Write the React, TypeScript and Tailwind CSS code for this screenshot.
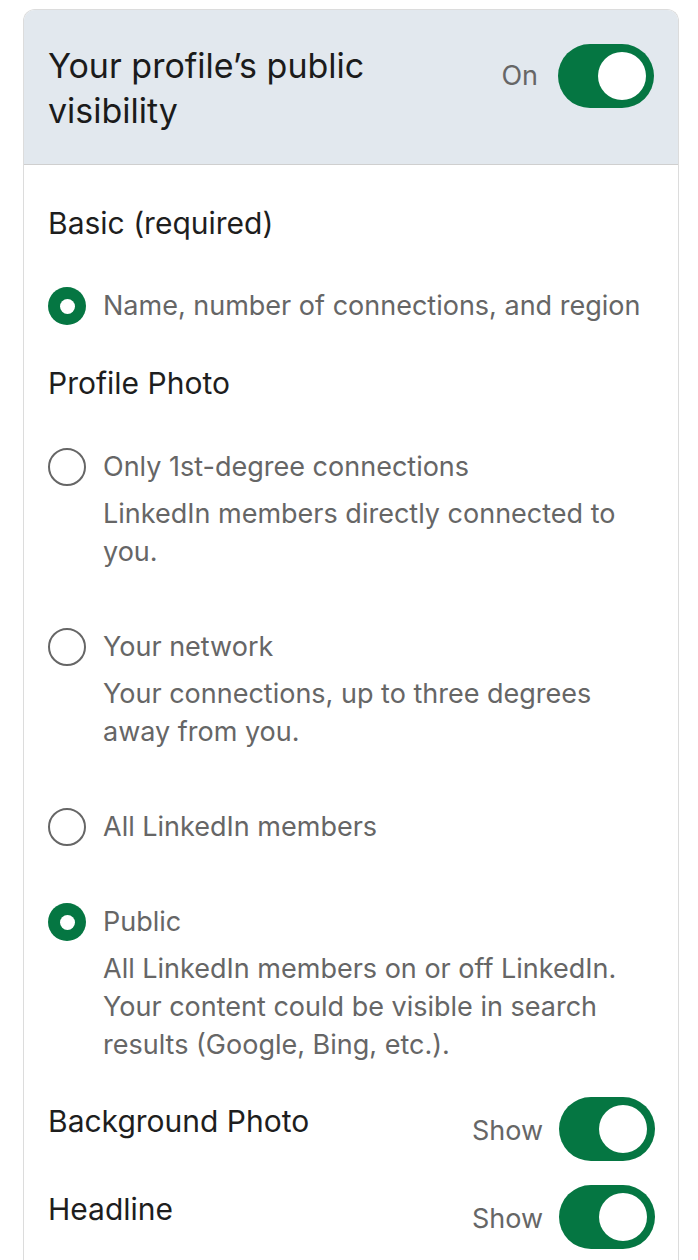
import React from "react";

const FONT = { fontFamily: 'Inter, "Liberation Sans", Arial, sans-serif' };

function Toggle({ on = true }: { on?: boolean }) {
  return (
    <div
      className={`w-[96px] h-[64px] rounded-full flex items-center px-[8px] ${
        on ? "bg-[#057642] justify-end" : "bg-[#8c8c8c] justify-start"
      }`}
    >
      <div className="w-[48px] h-[48px] rounded-full bg-white" />
    </div>
  );
}

function Radio({ checked }: { checked: boolean }) {
  return checked ? (
    <div className="w-[38px] h-[38px] rounded-full bg-[#057642] flex items-center justify-center shrink-0">
      <div className="w-[15px] h-[15px] rounded-full bg-white" />
    </div>
  ) : (
    <div className="w-[38px] h-[38px] rounded-full border-2 border-[#666666] shrink-0" />
  );
}

interface Option {
  title: string;
  desc?: string;
  checked: boolean;
}

const PHOTO_OPTIONS: Option[] = [
  {
    title: "Only 1st-degree connections",
    desc: "LinkedIn members directly connected to you.",
    checked: false,
  },
  {
    title: "Your network",
    desc: "Your connections, up to three degrees away from you.",
    checked: false,
  },
  { title: "All LinkedIn members", checked: false },
  {
    title: "Public",
    desc: "All LinkedIn members on or off LinkedIn. Your content could be visible in search results (Google, Bing, etc.).",
    checked: true,
  },
];

function RadioRow({ option }: { option: Option }) {
  return (
    <div className="flex gap-[17px]">
      <Radio checked={option.checked} />
      <div className="flex-1 min-w-0">
        <div className="text-[27px] leading-[38px] text-[#666666]">{option.title}</div>
        {option.desc && (
          <div className="mt-[9px] text-[27px] leading-[38px] text-[#666666] pr-[10px]">
            {option.desc}
          </div>
        )}
      </div>
    </div>
  );
}

function ShowRow({ label }: { label: string }) {
  return (
    <div className="flex items-start justify-between">
      <div className="mt-[4px] text-[30px] leading-[40px] text-[#1e1e1e]">{label}</div>
      <div className="flex items-center gap-[16px] mr-[-1px]">
        <span className="text-[27px] text-[#666666] mt-[4px]">Show</span>
        <Toggle />
      </div>
    </div>
  );
}

export default function App() {
  return (
    <div className="min-h-[1260px] bg-white pt-[9px] pl-[23px] pr-[19px]" style={FONT}>
      <div className="rounded-t-[12px] border border-[#dcdcdc] border-b-0 overflow-hidden">
        <div className="bg-[#e2e8ee] border-b border-[#cfcfcf] pl-[24px] pr-[24px] pt-[33px] pb-[31px] flex items-start justify-between">
          <div className="text-[34px] leading-[45px] text-[#1b1b1b] w-[380px]">
            Your profile’s public visibility
          </div>
          <div className="flex items-center gap-[20px] mt-[1px]">
            <span className="text-[27px] text-[#666666]">On</span>
            <Toggle />
          </div>
        </div>
        <div className="bg-white pl-[24px] pr-[24px] pt-[38px] pb-[12px]">
          <div className="text-[30px] leading-[40px] text-[#1e1e1e]">Basic (required)</div>
          <div className="mt-[44px] flex items-center gap-[17px]">
            <Radio checked />
            <span className="text-[27px] leading-[38px] text-[#666666]">
              Name, number of connections, and region
            </span>
          </div>
          <div className="mt-[38px] text-[30px] leading-[40px] text-[#1e1e1e]">Profile Photo</div>
          <div className="mt-[45px] flex flex-col gap-[57px]">
            {PHOTO_OPTIONS.map((o) => (
              <RadioRow key={o.title} option={o} />
            ))}
          </div>
          <div className="mt-[33px] flex flex-col gap-[24px]">
            <ShowRow label="Background Photo" />
            <ShowRow label="Headline" />
          </div>
        </div>
      </div>
    </div>
  );
}
